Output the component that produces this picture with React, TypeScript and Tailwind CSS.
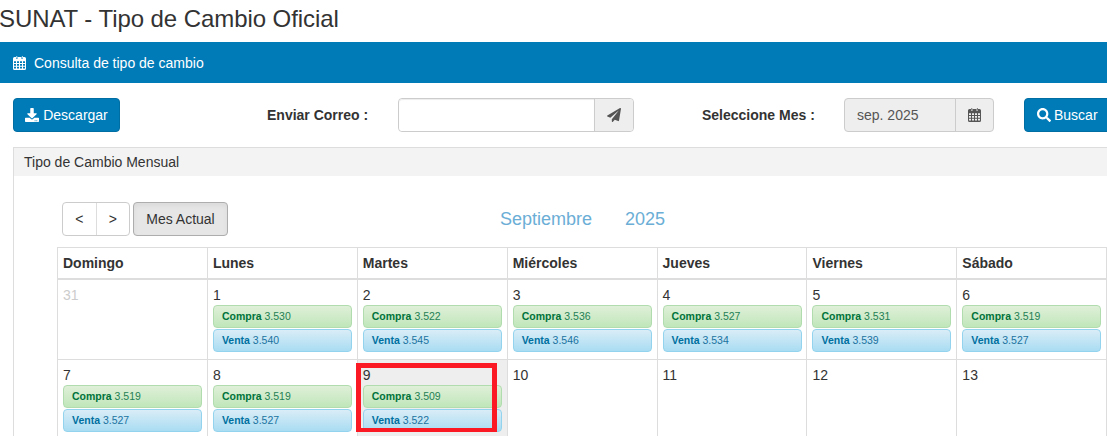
import { FaDownload, FaPaperPlane, FaSearch } from "react-icons/fa"

const DAYS = ["Domingo", "Lunes", "Martes", "Miércoles", "Jueves", "Viernes", "Sábado"]

interface Day {
  day: number
  compra?: string
  venta?: string
  muted?: boolean
  today?: boolean
}

const WEEKS: Day[][] = [
  [
    { day: 31, muted: true },
    { day: 1, compra: "3.530", venta: "3.540" },
    { day: 2, compra: "3.522", venta: "3.545" },
    { day: 3, compra: "3.536", venta: "3.546" },
    { day: 4, compra: "3.527", venta: "3.534" },
    { day: 5, compra: "3.531", venta: "3.539" },
    { day: 6, compra: "3.519", venta: "3.527" },
  ],
  [
    { day: 7, compra: "3.519", venta: "3.527" },
    { day: 8, compra: "3.519", venta: "3.527" },
    { day: 9, compra: "3.509", venta: "3.522", today: true },
    { day: 10 },
    { day: 11 },
    { day: 12 },
    { day: 13 },
  ],
]

// calendario estilo font awesome 4, con la grilla calada
function CalendarIcon() {
  return (
    <svg viewBox="0 0 13 14" className="h-[14px] w-[13px] shrink-0" fill="currentColor">
      <path
        fillRule="evenodd"
        d="M2.5 1H3V3H4.5V1H8.5V3H10V1H11.5A1.5 1.5 0 0 1 13 2.5V12.5A1.5 1.5 0 0 1 11.5 14H1.5A1.5 1.5 0 0 1 0 12.5V2.5A1.5 1.5 0 0 1 1.5 1ZM1 5.2V7H3V5.2ZM4 5.2V7H6V5.2ZM7 5.2V7H9V5.2ZM10 5.2V7H12V5.2ZM1 8V9.8H3V8ZM4 8V9.8H6V8ZM7 8V9.8H9V8ZM10 8V9.8H12V8ZM1 10.8V12.6H3V10.8ZM4 10.8V12.6H6V10.8ZM7 10.8V12.6H9V10.8ZM10 10.8V12.6H12V10.8Z"
      />
      <rect x="3.4" y="0" width="0.8" height="2.6" />
      <rect x="8.9" y="0" width="0.8" height="2.6" />
    </svg>
  )
}

function Rate({ label, value, green }: { label: string; value: string; green?: boolean }) {
  return (
    <div
      className={
        green
          ? "h-[23px] rounded-[4px] border border-[#b0dcae] bg-gradient-to-b from-[#dff0d8] to-[#c0e6ba] pl-[8px] text-[10.5px] leading-[20px]"
          : "h-[23px] rounded-[4px] border border-[#93d3ee] bg-gradient-to-b from-[#d9edf7] to-[#a9dcf2] pl-[8px] text-[10.5px] leading-[20px]"
      }
    >
      <b className={green ? "text-[#00733b]" : "text-[#0070a0]"}>{label}</b>{" "}
      <span className={green ? "text-[#1f7f55]" : "text-[#1a729f]"}>{value}</span>
    </div>
  )
}

export default function App() {
  return (
    <div className="h-[436px] w-[1107px] overflow-hidden bg-white font-['Liberation_Sans',Arial,sans-serif] text-[14px] text-[#333]">
      <h1 className="-ml-[1px] h-[42px] pt-[5px] text-[24px] leading-[28px] tracking-[-0.07px] whitespace-nowrap text-[#333]">
        SUNAT - Tipo de Cambio Oficial
      </h1>

      <div className="flex h-[41px] items-center gap-[8px] bg-[#007bb8] pl-[13px] text-white">
        <CalendarIcon />
        <span className="pt-[1px] text-[14px]">Consulta de tipo de cambio</span>
      </div>

      <div className="flex h-[64px] items-start pt-[15px] pl-[13px]">
        <button className="flex h-[34px] w-[107px] shrink-0 items-center justify-center gap-[4px] rounded-[4px] border border-[#006da3] bg-[#007bb8] text-white">
          <FaDownload className="h-[14px] w-[14px]" />
          Descargar
        </button>
        <label className="ml-[147px] w-[131px] shrink-0 pt-[9px] text-[14px] leading-[16px] font-bold">
          Enviar Correo :
        </label>
        <div className="flex h-[34px] w-[236px] shrink-0 rounded-[4px] border border-[#ccc]">
          <div className="flex-1 rounded-l-[4px] bg-white shadow-[inset_0_1px_1px_rgba(0,0,0,0.075)]" />
          <div className="flex w-[39px] items-center justify-center rounded-r-[4px] border-l border-[#ccc] bg-[#eee] text-[#555]">
            <FaPaperPlane className="h-[14px] w-[14px]" />
          </div>
        </div>
        <label className="ml-[68px] w-[142px] shrink-0 pt-[9px] text-[14px] leading-[16px] font-bold">
          Seleccione Mes :
        </label>
        <div className="flex h-[34px] w-[150px] shrink-0 rounded-[4px] border border-[#ccc] bg-[#eee] text-[#555]">
          <div className="flex-1 pl-[12px] leading-[32px]">sep. 2025</div>
          <div className="flex w-[38px] items-center justify-center border-l border-[#ccc]">
            <CalendarIcon />
          </div>
        </div>
        <button className="ml-[30px] flex h-[34px] w-[90px] shrink-0 items-center gap-[3px] rounded-[4px] border border-[#006da3] bg-[#007bb8] pl-[12px] text-white">
          <FaSearch className="h-[14px] w-[14px]" />
          Buscar
        </button>
      </div>

      <div className="ml-[13px] w-[1110px] border-t border-l border-[#ddd]">
        <div className="h-[28px] bg-[#f3f3f3] pl-[10px] text-[14px] leading-[29px]">Tipo de Cambio Mensual</div>

        <div className="pt-[26px] pl-[43px]">
          <div className="ml-[5px] flex h-[34px] items-center">
            <div className="flex h-[34px] w-[68px] rounded-[4px] border border-[#ccc] bg-white">
              <div className="flex-1 border-r border-[#ddd] text-center leading-[32px]">&lt;</div>
              <div className="flex-1 text-center leading-[32px]">&gt;</div>
            </div>
            <div className="ml-[3px] h-[34px] w-[95px] rounded-[4px] border border-[#adadad] bg-[#e6e6e6] text-center leading-[32px] shadow-[inset_0_3px_5px_rgba(0,0,0,0.05)]">
              Mes Actual
            </div>
            <div className="ml-[272px] flex gap-[33px] text-[18px] text-[#6baed6]">
              <span>Septiembre</span>
              <span>2025</span>
            </div>
          </div>

          <div className="relative mt-[11px] w-[1050px] border-t border-l border-[#ddd]">
            <div className="grid h-[32px] grid-cols-[repeat(7,149.9px)] border-b-[2px] border-[#ddd]">
              {DAYS.map((d) => (
                <div key={d} className="border-r border-[#ddd] pl-[5px] leading-[31px] font-bold">
                  {d}
                </div>
              ))}
            </div>
            {WEEKS.map((week) => (
              <div key={week[0].day} className="grid h-[80px] grid-cols-[repeat(7,149.9px)] border-b border-[#ddd]">
                {week.map((d) => (
                  <div
                    key={d.day}
                    className={
                      d.today
                        ? "border-r border-[#ddd] bg-[#eeeeee] px-[5px] pt-[7px]"
                        : "border-r border-[#ddd] px-[5px] pt-[7px]"
                    }
                  >
                    <div className={d.muted ? "h-[17px] text-[14px] leading-[17px] text-[#ccc]" : "h-[17px] text-[14px] leading-[17px]"}>
                      {d.day}
                    </div>
                    {d.compra && (
                      <div className="mt-[1px] flex w-[139px] flex-col gap-[1px]">
                        <Rate label="Compra" value={d.compra} green />
                        <Rate label="Venta" value={d.venta ?? ""} />
                      </div>
                    )}
                  </div>
                ))}
              </div>
            ))}
            {/* marca roja sobre el dia actual */}
            <div className="absolute top-[115px] left-[298px] h-[69px] w-[141px] border-[5px] border-b-[4px] border-[#fb1a23]" />
          </div>
        </div>
      </div>
    </div>
  )
}
